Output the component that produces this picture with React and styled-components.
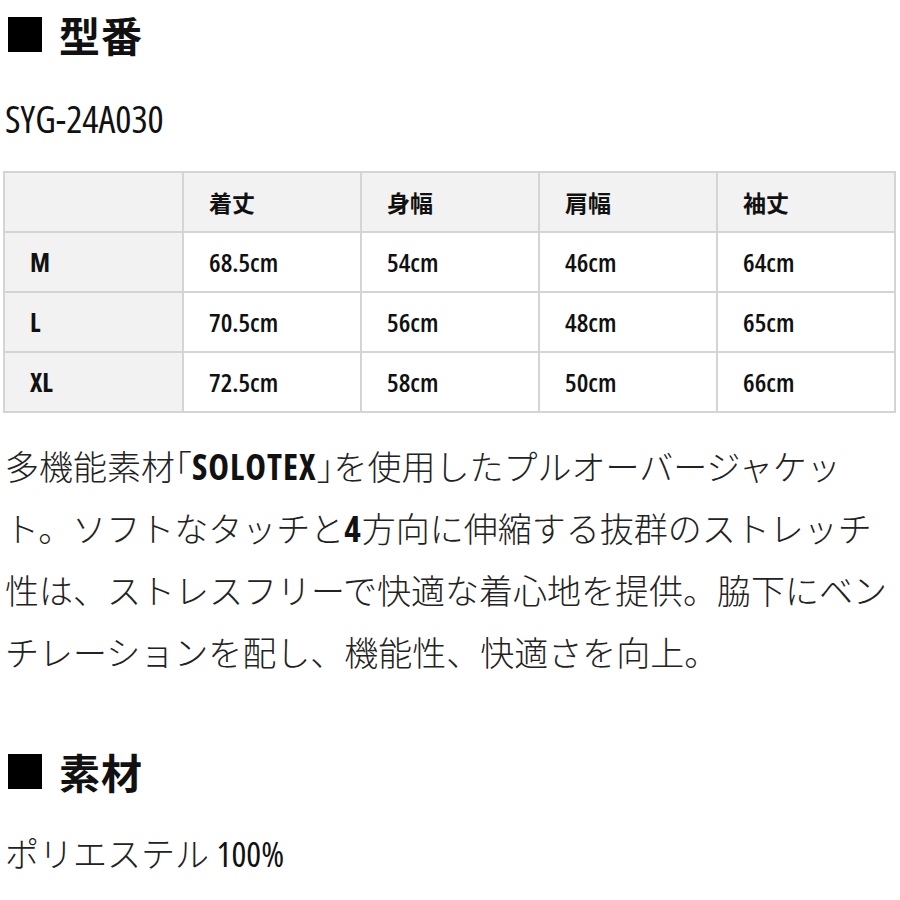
import styled, { createGlobalStyle } from 'styled-components';

const GlobalStyle = createGlobalStyle`
  body {
    margin: 0;
    background: #fff;
    color: #1a1a1a;
    font-family: "Noto Sans CJK JP", sans-serif;
  }
`;

//Condensed latin face for codes, sizes and numbers
const latin = `"Open Sans", "Noto Sans CJK JP", sans-serif`;

//Whole page, text starts a few px in from the left edge
const Page = styled.div`
  padding: 8px 4px 0 3px;
  width: 893px;
`;

//Black square + bold title
const Heading = styled.h2`
  display: flex;
  align-items: center;
  gap: 17px;
  margin: 0 0 ${(p) => p.$after || 40}px;
  height: 52px;
  font-size: 41px;
  font-weight: 700;
  color: #111;
  letter-spacing: 1px;
`;

const Square = styled.span`
  display: block;
  width: 34px;
  height: 35px;
  background: #000;
  margin-left: 5px;
`;

const Code = styled.div`
  font-family: ${latin};
  font-stretch: 75%;
  font-weight: 500;
  font-size: 38px;
  line-height: 44px;
  margin-left: 2px;
  margin-bottom: 31px;
  color: #111;
`;

//Size chart
const Table = styled.div`
  display: grid;
  grid-template-columns: 177px repeat(4, 1fr);
  border: 2px solid #d4d4d4;
  background: #d4d4d4;
  gap: 2px;
  margin-bottom: 22px;
`;

const Cell = styled.div`
  height: 58px;
  display: flex;
  align-items: center;
  padding-left: 25px;
  background: ${(p) => (p.$shade ? '#f2f2f2' : '#fff')};
  font-family: ${(p) => (p.$jp ? '"Noto Sans CJK JP", sans-serif' : latin)};
  font-stretch: 75%;
  font-weight: ${(p) => (p.$bold ? 700 : 600)};
  font-size: ${(p) => (p.$jp ? '23px' : '26px')};
  color: #111;
`;

const Body = styled.p`
  margin: 0 0 62px 2px;
  font-size: 34px;
  line-height: 62px;
  font-weight: 300;
  color: #222;
  white-space: nowrap;
`;

//Brackets around a brand name are set half width
const Quote = styled.span`
  font-feature-settings: "halt";
`;

const Latin = styled.span`
  font-family: ${latin};
  font-stretch: 75%;
  font-weight: ${(p) => (p.$light ? 500 : 700)};
  font-size: 35px;
  letter-spacing: ${(p) => (p.$light ? 0 : 1)}px;
  line-height: 1;
  color: #111;
`;

const Material = styled.div`
  font-size: 34px;
  line-height: 44px;
  font-weight: 300;
  margin-left: 2px;
  color: #222;
`;

const heads = ['着丈', '身幅', '肩幅', '袖丈'];
const rows = [
  ['M', '68.5cm', '54cm', '46cm', '64cm'],
  ['L', '70.5cm', '56cm', '48cm', '65cm'],
  ['XL', '72.5cm', '58cm', '50cm', '66cm'],
];

export default function App() {
  return (
    <Page>
      <GlobalStyle />
      <Heading $after={36}>
        <Square />
        型番
      </Heading>
      <Code>SYG-24A030</Code>

      <Table>
        <Cell $shade />
        {heads.map((h) => (
          <Cell key={h} $shade $jp $bold>{h}</Cell>
        ))}
        {rows.map((r) =>
          r.map((v, i) => (
            <Cell key={r[0] + i} $shade={i === 0} $bold={i === 0}>{v}</Cell>
          ))
        )}
      </Table>

      <Body>
        多機能素材<Quote>「<Latin>SOLOTEX</Latin>」</Quote>を使用したプルオーバージャケッ<br />
        ト。ソフトなタッチと<Latin>4</Latin>方向に伸縮する抜群のストレッチ<br />
        性は、ストレスフリーで快適な着心地を提供。脇下にベン<br />
        チレーションを配し、機能性、快適さを向上。
      </Body>

      <Heading $after={34}>
        <Square />
        素材
      </Heading>
      <Material>
        ポリエステル <Latin $light>100%</Latin>
      </Material>
    </Page>
  );
}
